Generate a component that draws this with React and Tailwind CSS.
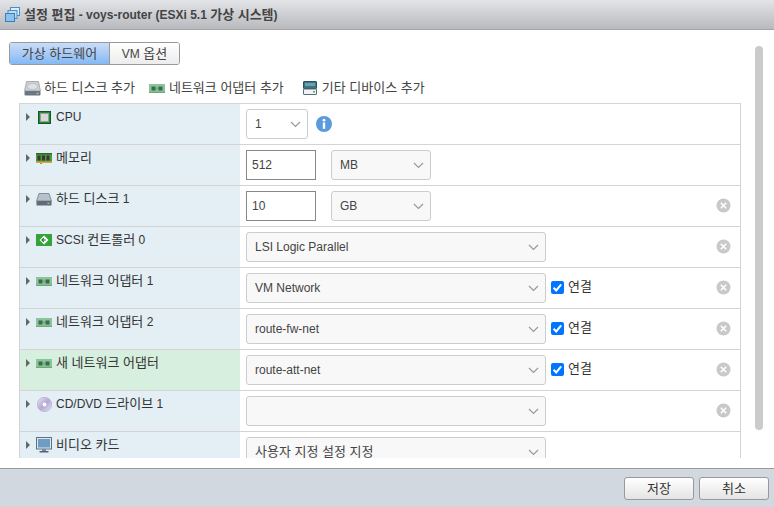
const FONT = "font-['Liberation_Sans','Noto_Sans_CJK_KR',sans-serif]";

function K({ children }) {
  return <span className="text-[13px]">{children}</span>;
}

function Chevron() {
  return (
    <svg width="11" height="7" viewBox="0 0 11 7" className="shrink-0">
      <path d="M1 1l4.5 4.5L10 1" fill="none" stroke="#999" strokeWidth="1.2" />
    </svg>
  );
}

function Select({ value, w, white, ml = "" }) {
  return (
    <div className={`${w} ${ml} pl-[8px] h-[30px] rounded-[3px] border border-[#ccc] ${white ? "bg-white" : "bg-[#f8f8f8]"} flex items-center justify-between pr-[6px] text-[12px] text-[#444] shrink-0`}>
      <span>{value}</span>
      <Chevron />
    </div>
  );
}

function NumInput({ value }) {
  return (
    <div className="w-[70px] h-[30px] border border-[#888] bg-white flex items-center pl-[5px] text-[12px] text-[#444] shrink-0">
      {value}
    </div>
  );
}

function Remove() {
  return (
    <svg width="15" height="15" viewBox="0 0 15 15" className="shrink-0 -mt-[2px]">
      <circle cx="7.5" cy="7.5" r="7" fill="#c9c9c9" />
      <path d="M4.8 4.8l5.4 5.4M10.2 4.8l-5.4 5.4" stroke="#fff" strokeWidth="1.6" />
    </svg>
  );
}

function Connect() {
  return (
    <div className="flex items-center ml-[5px] shrink-0 -mt-[2px]">
      <div className="w-[13px] h-[13px] rounded-[2px] bg-[#0075ff] flex items-center justify-center">
        <svg width="11" height="11" viewBox="0 0 11 11">
          <path d="M1.6 5.8l2.6 2.6 5-6" fill="none" stroke="#fff" strokeWidth="2" />
        </svg>
      </div>
      <span className="ml-[4px] text-[13px] text-[#333]">연결</span>
    </div>
  );
}

function CpuIcon() {
  return (
    <svg width="13" height="13" viewBox="0 0 13 13">
      <rect x="0.5" y="0.5" width="12" height="12" fill="#1f8a2e" stroke="#0e5c1c" />
      <rect x="2.5" y="2.5" width="8" height="8" fill="#d8d8d8" stroke="#9a9a9a" />
    </svg>
  );
}
function RamIcon() {
  return (
    <svg width="16" height="11" viewBox="0 0 16 11">
      <rect x="0" y="0" width="16" height="10" fill="#4f9a45" />
      <rect x="0" y="0" width="16" height="1.5" fill="#2f6a2a" />
      <rect x="1.5" y="2.5" width="3" height="5" fill="#3a3a32" />
      <rect x="6" y="2.5" width="3" height="5" fill="#3a3a32" />
      <rect x="10.5" y="2.5" width="3" height="5" fill="#3a3a32" />
      <rect x="0" y="8.5" width="16" height="1.5" fill="#d9a441" />
      <rect x="4" y="10" width="2" height="1" fill="#b98f3a" />
    </svg>
  );
}
function DiskIcon() {
  return (
    <svg width="16" height="13" viewBox="0 0 16 13">
      <path d="M3 0.5h10l2.5 7.5h-15z" fill="#b7c1cc" stroke="#6f7b87" strokeWidth="0.8" />
      <rect x="0.5" y="8" width="15" height="4.5" rx="0.5" fill="#5f6c78" />
      <rect x="11.5" y="9.7" width="2" height="1.3" fill="#8fd36a" />
    </svg>
  );
}
function AddDiskIcon() {
  return (
    <svg width="17" height="15" viewBox="0 0 17 15">
      <path d="M2.5 0.5h12l2 9.5h-16z" fill="#ccd0d4" stroke="#9aa0a6" strokeWidth="0.8" />
      <ellipse cx="8.5" cy="5.5" rx="5" ry="3" fill="#dfe2e5" stroke="#aeb3b8" strokeWidth="0.6" />
      <rect x="0.5" y="10" width="16" height="4.5" rx="1" fill="#6c7680" />
      <rect x="12.5" y="11.7" width="2" height="1.2" fill="#b8c2ca" />
    </svg>
  );
}
function OtherIcon() {
  return (
    <svg width="14" height="14" viewBox="0 0 14 14">
      <rect x="0.5" y="0.5" width="13" height="7" rx="0.5" fill="#3d7386" stroke="#2a5464" />
      <rect x="2" y="2" width="10" height="3" fill="#6d9fb0" />
      <rect x="0.5" y="8" width="13" height="5.5" rx="0.5" fill="#f0f3f4" stroke="#5a6c76" />
      <rect x="10" y="10" width="2" height="1.5" fill="#4cae4c" />
    </svg>
  );
}
function ScsiIcon() {
  return (
    <svg width="16" height="12" viewBox="0 0 16 12">
      <rect width="16" height="12" fill="#35a33c" />
      <path d="M8 1.5l4.5 4.5L8 10.5 3.5 6z" fill="#fff" />
      <path d="M9.8 6H6.2M7.8 4.2L6 6l1.8 1.8" fill="none" stroke="#1d7a28" strokeWidth="1.2" />
    </svg>
  );
}
function NicIcon() {
  return (
    <svg width="16" height="9" viewBox="0 0 16 9">
      <rect width="16" height="9" fill="#8cc49a" />
      <rect x="2.5" y="2.5" width="4" height="4" fill="#3d6b4c" />
      <rect x="9.5" y="2.5" width="4" height="4" fill="#3d6b4c" />
      <rect x="7.5" y="3.5" width="1" height="2" fill="#5d8d6b" />
      <rect x="0" y="7.8" width="16" height="1.2" fill="#6da87b" />
    </svg>
  );
}
function CdIcon() {
  return (
    <svg width="15" height="15" viewBox="0 0 15 15">
      <defs>
        <linearGradient id="cdg" x1="0" y1="0" x2="1" y2="1">
          <stop offset="0" stopColor="#e9e9f2" />
          <stop offset="0.5" stopColor="#b9a6dc" />
          <stop offset="1" stopColor="#e4e6ef" />
        </linearGradient>
      </defs>
      <circle cx="7.5" cy="7.5" r="7.2" fill="url(#cdg)" stroke="#a9adb8" strokeWidth="0.6" />
      <circle cx="7.5" cy="7.5" r="2.4" fill="#fff" stroke="#9a9eaa" strokeWidth="0.6" />
    </svg>
  );
}
function MonitorIcon() {
  return (
    <svg width="16" height="16" viewBox="0 0 16 16">
      <rect x="0.5" y="0.5" width="15" height="11.5" fill="#dfe6ee" stroke="#5d7288" />
      <rect x="2" y="2" width="12" height="8.5" fill="#6f9cc2" />
      <rect x="6" y="12" width="4" height="2" fill="#7a8a9a" />
      <rect x="3.5" y="14" width="9" height="1.5" fill="#4e6478" />
    </svg>
  );
}

function Row({ icon, label, green, children, remove, connect, latin }) {
  return (
    <div className="flex h-[41px] border-b border-[#d4d4d4] shrink-0">
      <div className={`w-[220px] shrink-0 ${green ? "bg-[#d6efde]" : "bg-[#e3eef5]"} flex items-start pl-[6px] pt-[5px]`}>
        <div className="w-0 h-0 mt-[4px] border-y-[4px] border-y-transparent border-l-[4px] border-l-[#666] shrink-0" />
        <div className="w-[16px] h-[16px] ml-[6px] flex items-center justify-center shrink-0">{icon}</div>
        <span className={`ml-[4px] ${latin ? "mt-[1px]" : ""} text-[12px] leading-[15px] text-[#333]`}>{label}</span>
      </div>
      <div className="flex-1 flex items-center pl-[6px] pr-[9px]">
        {children}
        {connect && <Connect />}
        <div className="flex-1" />
        {remove && <Remove />}
      </div>
    </div>
  );
}

function Tool({ icon, label, className = "" }) {
  return (
    <div className={`flex items-center ${className}`}>
      <div className="w-[17px] flex justify-center">{icon}</div>
      <span className="ml-[3px] text-[13px] text-[#444]">{label}</span>
    </div>
  );
}

function Btn({ label }) {
  return (
    <div className="w-[70px] h-[23px] rounded-[3px] border border-[#999] bg-gradient-to-b from-white to-[#e4e4e4] flex items-center justify-center text-[13px] text-[#333]">
      {label}
    </div>
  );
}

export default function App() {
  return (
    <div className={`${FONT} w-[774px] h-[507px] bg-white flex flex-col overflow-hidden`}>
      <div className="h-[30px] shrink-0 border-b border-[#a3a3a8] bg-gradient-to-b from-[#e3e4e8] to-[#b9babd] flex items-center pl-[5px]">
        <svg width="16" height="16" viewBox="0 0 16 16">
          <rect x="5.5" y="0.5" width="9" height="8" fill="#dcecf9" stroke="#4a8fc9" />
          <rect x="3" y="3.5" width="9" height="8" fill="#bcdcf4" stroke="#4a8fc9" />
          <rect x="0.5" y="6.5" width="9" height="8" fill="#8fc2ea" stroke="#3b7fb8" />
        </svg>
        <span className="ml-[3px] text-[12px] font-bold text-[#444]"><K>설정 편집</K> - voys-router (ESXi 5.1 <K>가상 시스템</K>)</span>
      </div>

      <div className="flex-1 min-h-0 relative pb-[10px] flex flex-col">
        <div className="flex-1 min-h-0 overflow-hidden pr-[33px]">
          <div className="pl-[9px] pt-[12px]">
            <div className="flex w-[171px] h-[23px] rounded-[3px] border border-[#999] overflow-hidden text-[12px] text-[#444]">
              <div className="w-[100px] bg-gradient-to-b from-[#cbdcf7] to-[#83b9f5] border-r border-[#999] flex items-center justify-center"><K>가상 하드웨어</K></div>
              <div className="flex-1 bg-gradient-to-b from-white to-[#ececec] flex items-center justify-center"><span>VM&nbsp;<K>옵션</K></span></div>
            </div>
          </div>
          <div className="flex items-center h-[38px] pt-[8px] pl-[24px]">
            <Tool icon={<AddDiskIcon />} label="하드 디스크 추가" />
            <Tool className="ml-[14px]" icon={<NicIcon />} label="네트워크 어댑터 추가" />
            <Tool className="ml-[18px]" icon={<OtherIcon />} label="기타 디바이스 추가" />
          </div>
          <div className="ml-[19px] w-[722px] border-x border-t border-[#d4d4d4] flex flex-col">
            <Row icon={<CpuIcon />} label="CPU" latin>
              <Select value="1" w="w-[62px]" white />
              <svg width="16" height="16" viewBox="0 0 16 16" className="ml-[8px] shrink-0">
                <circle cx="8" cy="8" r="8" fill="#5b9bdc" />
                <circle cx="8" cy="4.2" r="1.4" fill="#fff" />
                <rect x="6.8" y="6.5" width="2.4" height="6.3" fill="#fff" />
              </svg>
            </Row>
            <Row icon={<RamIcon />} label={<K>메모리</K>}>
              <NumInput value="512" />
              <Select value="MB" w="w-[100px]" ml="ml-[15px]" />
            </Row>
            <Row icon={<DiskIcon />} label={<><K>하드 디스크</K> 1</>} remove>
              <NumInput value="10" />
              <Select value="GB" w="w-[100px]" ml="ml-[15px]" />
            </Row>
            <Row icon={<ScsiIcon />} label={<>SCSI <K>컨트롤러</K> 0</>} remove>
              <Select value="LSI Logic Parallel" w="w-[300px]" />
            </Row>
            <Row icon={<NicIcon />} label={<><K>네트워크 어댑터</K> 1</>} remove connect>
              <Select value="VM Network" w="w-[300px]" />
            </Row>
            <Row icon={<NicIcon />} label={<><K>네트워크 어댑터</K> 2</>} remove connect>
              <Select value="route-fw-net" w="w-[300px]" />
            </Row>
            <Row icon={<NicIcon />} label={<K>새 네트워크 어댑터</K>} green remove connect>
              <Select value="route-att-net" w="w-[300px]" />
            </Row>
            <Row icon={<CdIcon />} label={<>CD/DVD <K>드라이브</K> 1</>} remove>
              <Select value="" w="w-[300px]" />
            </Row>
            <Row icon={<MonitorIcon />} label={<K>비디오 카드</K>}>
              <Select value={<K>사용자 지정 설정 지정</K>} w="w-[300px]" />
            </Row>
          </div>
        </div>
        <div className="absolute left-[755px] top-[16px] w-[8px] h-[384px] rounded-[4px] bg-[#cbcbcb]" />
      </div>

      <div className="h-[39px] shrink-0 border-t border-[#9a9a9a] bg-[#d1d8e0] flex items-start justify-end gap-[5px] pt-[8px] pr-[5px]">
        <Btn label="저장" />
        <Btn label="취소" />
      </div>
    </div>
  );
}
